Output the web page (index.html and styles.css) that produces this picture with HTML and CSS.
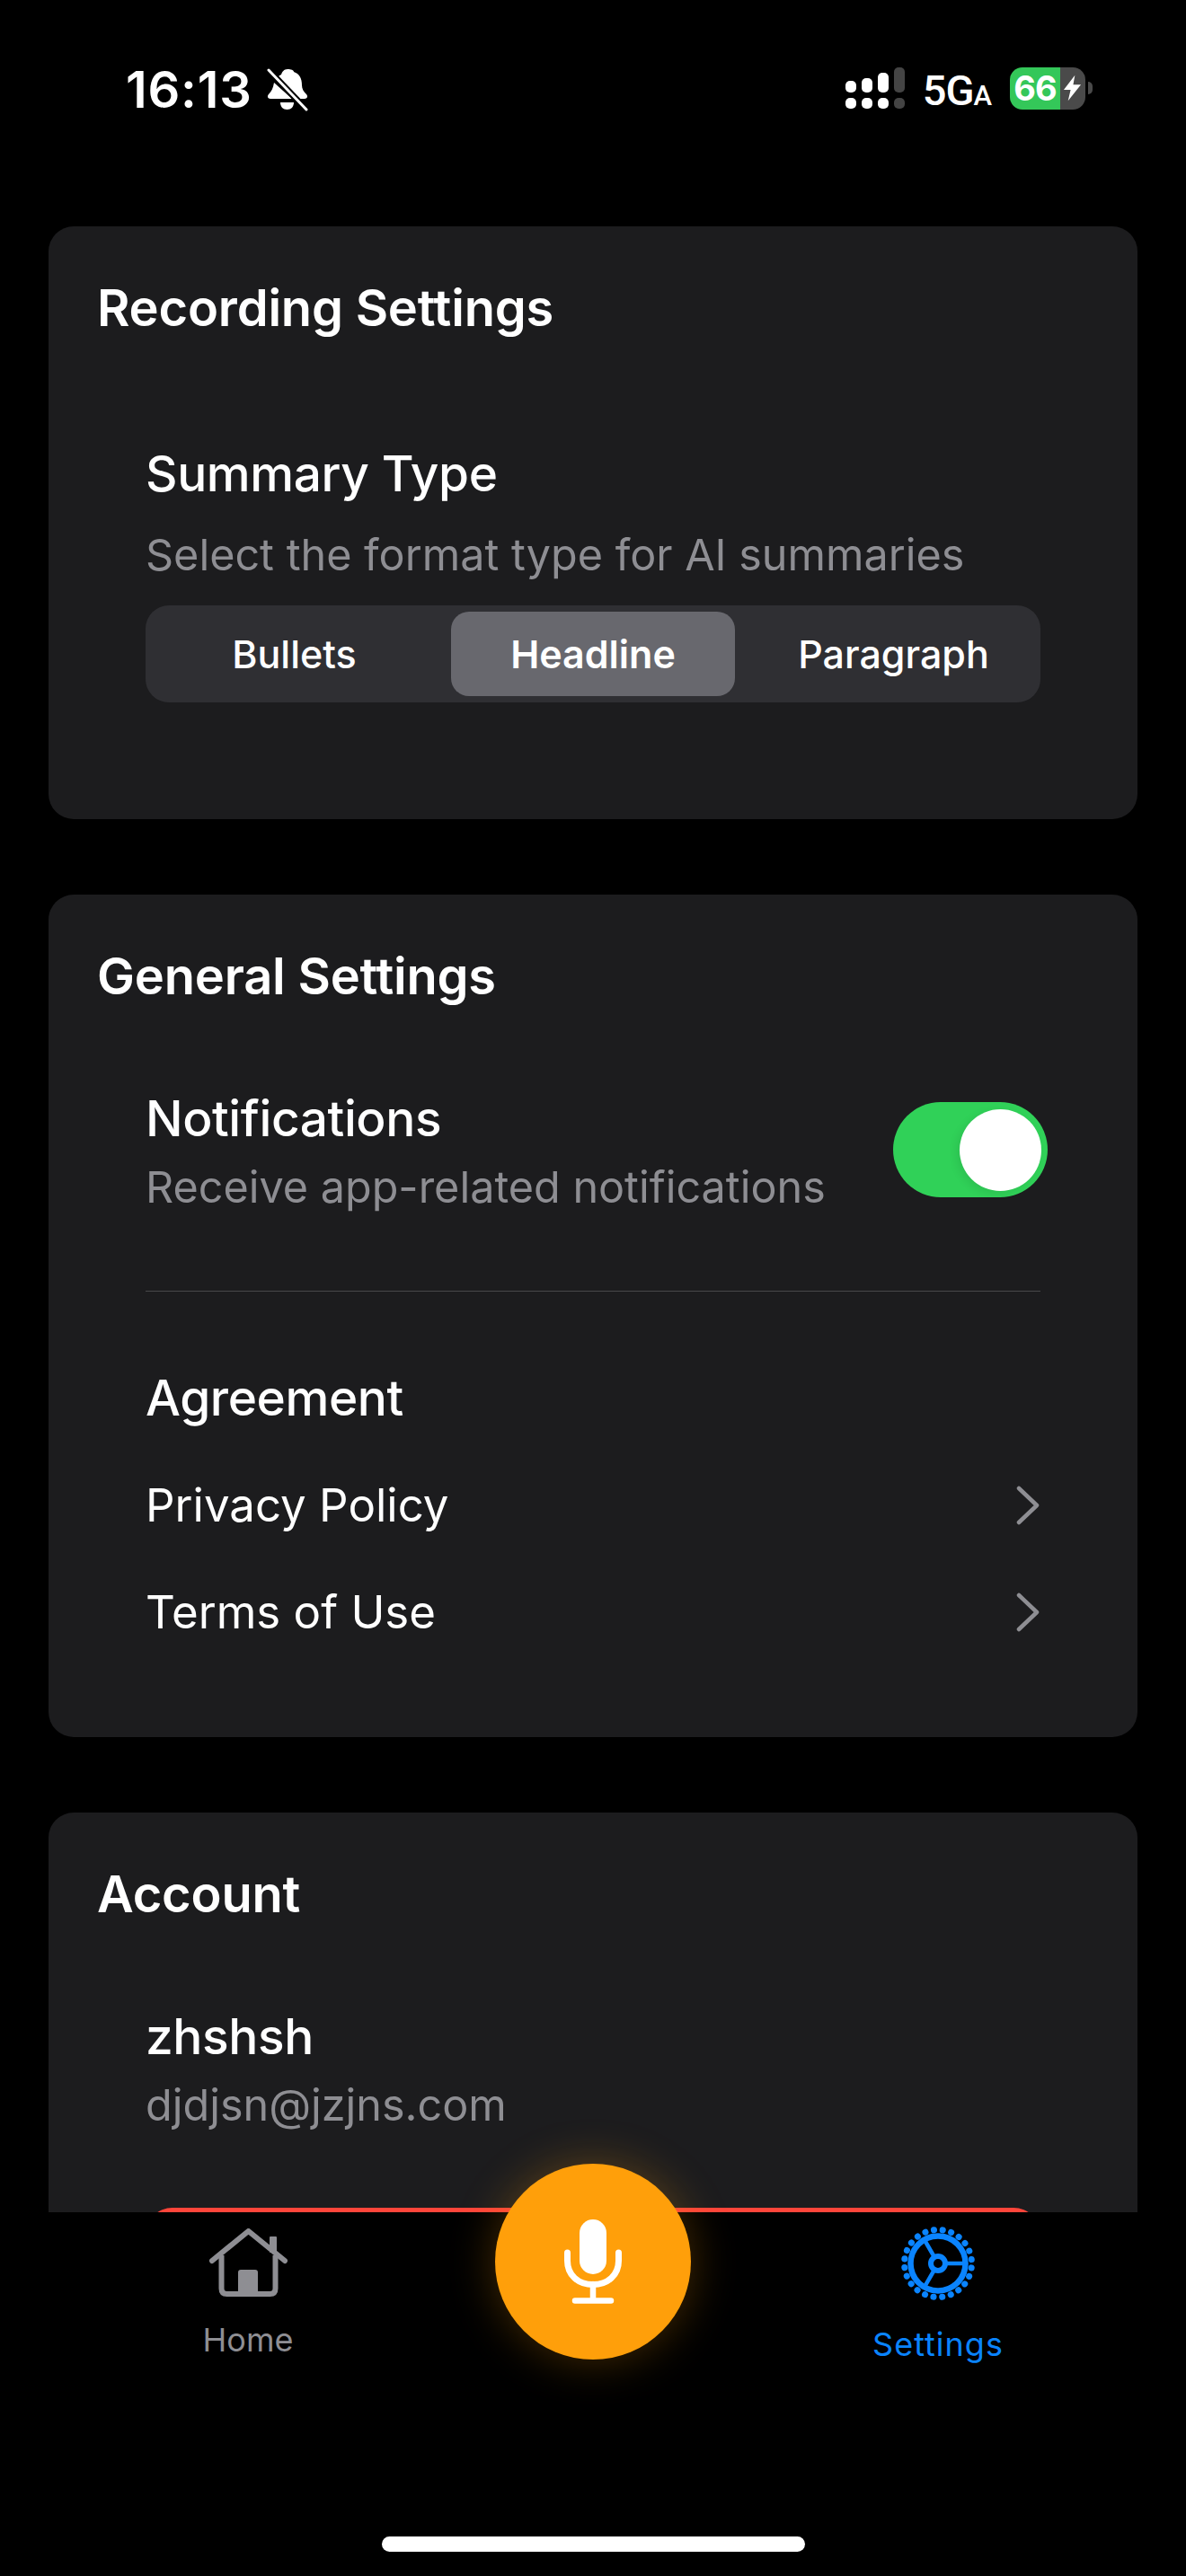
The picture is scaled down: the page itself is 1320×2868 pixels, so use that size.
FILE: index.html
```html
<!DOCTYPE html>
<html lang="en">
<head>
    <meta charset="UTF-8">
    <meta name="viewport" content="width=device-width, initial-scale=1.0">
    <title>Settings</title>
    <link rel="stylesheet" href="styles.css">
</head>
<body>
    <header class="status">
        <div class="status-left">
            <span class="time">16:13</span>
            <svg class="bell" viewBox="0 0 46 48">
                <path d="M23 1c-4 0-6 3-7 6-2 1-3 2-4 3l23 24h7c3 0 4-3 2-5-3-3-5-6-5-10 0-8-3-13-9-15 0-2-3-3-7-3z" fill="#fff"/>
                <path d="M8 16c-1 6-3 10-6 13-2 2-1 5 2 5h24z" fill="#fff"/>
                <path d="M15 38h15c0 5-3 8-7.500 8s-7.500-3-7.500-8z" fill="#fff"/>
                <path d="M2 2l42 44" stroke="#000" stroke-width="7"/>
                <path d="M2 2l42 44" stroke="#fff" stroke-width="3" stroke-linecap="round"/>
            </svg>
        </div>
        <div class="status-right">
            <svg class="signal" viewBox="0 0 66 46">
                <rect x="0" y="15" width="12" height="13" rx="5" fill="#fff"/>
                <rect x="18" y="12" width="12" height="16" rx="5" fill="#fff"/>
                <rect x="36" y="6" width="12" height="22" rx="5" fill="#fff"/>
                <rect x="54" y="0" width="12" height="28" rx="5" fill="#444"/>
                <rect x="0" y="34" width="12" height="12" rx="5" fill="#fff"/>
                <rect x="18" y="34" width="12" height="12" rx="5" fill="#fff"/>
                <rect x="36" y="34" width="12" height="12" rx="5" fill="#fff"/>
                <rect x="54" y="34" width="12" height="12" rx="5" fill="#444"/>
            </svg>
            <span class="net">5G<small>A</small></span>
            <div class="battery">
                <div class="battery-body">
                    <span class="battery-level">66</span>
                    <svg class="bolt" viewBox="0 0 22 30"><path d="M14 0L1 17h8l-3 13L21 11h-9z" fill="#fff"/></svg>
                </div>
                <div class="battery-nub"></div>
            </div>
        </div>
    </header>

    <main class="content">
        <section class="card card-recording">
            <h2>Recording Settings</h2>
            <div class="group group-summary">
                <h3>Summary Type</h3>
                <p class="hint">Select the format type for AI summaries</p>
                <div class="segments">
                    <div class="segment seg-left">Bullets</div>
                    <div class="segment active">Headline</div>
                    <div class="segment seg-right">Paragraph</div>
                </div>
            </div>
        </section>

        <section class="card card-general">
            <h2>General Settings</h2>
            <div class="group">
                <div class="row-toggle">
                    <div>
                        <h3>Notifications</h3>
                        <p class="hint">Receive app-related notifications</p>
                    </div>
                    <div class="toggle"><div class="knob"></div></div>
                </div>
                <div class="divider"></div>
                <h3 class="agreement">Agreement</h3>
                <div class="link-row">
                    <span>Privacy Policy</span>
                    <svg class="chevron" viewBox="0 0 27 44"><path d="M3 3l20 19L3 41" fill="none" stroke="#8e8e93" stroke-width="4.500" stroke-linecap="round" stroke-linejoin="round"/></svg>
                </div>
                <div class="link-row">
                    <span>Terms of Use</span>
                    <svg class="chevron" viewBox="0 0 27 44"><path d="M3 3l20 19L3 41" fill="none" stroke="#8e8e93" stroke-width="4.500" stroke-linecap="round" stroke-linejoin="round"/></svg>
                </div>
            </div>
        </section>

        <section class="card card-account">
            <h2>Account</h2>
            <div class="group">
                <h3>zhshsh</h3>
                <p class="hint">djdjsn@jzjns.com</p>
                <div class="logout"></div>
            </div>
        </section>
    </main>

    <nav class="tabbar">
        <div class="tab tab-home">
            <svg class="tab-icon" viewBox="0 0 87 76">
                <path d="M3 36L43.500 3 84 36" fill="none" stroke="#8e8e93" stroke-width="6" stroke-linecap="round" stroke-linejoin="round"/>
                <path d="M13.500 30v37c0 4 2 6 6 6h48c4 0 6-2 6-6V30" fill="none" stroke="#8e8e93" stroke-width="6"/>
                <path d="M68 10h6v16h-6z" fill="#8e8e93" stroke="#8e8e93" stroke-width="2" stroke-linejoin="round"/>
                <path d="M32 73V49c0-2 1-3 3-3h16c2 0 3 1 3 3v24z" fill="#8e8e93"/>
            </svg>
            <span>Home</span>
        </div>
        <button class="record">
            <svg viewBox="0 0 64 95" class="mic">
                <rect x="17" y="0" width="30" height="61" rx="15" fill="#fff"/>
                <path d="M3.500 37v9c0 16 12 26.500 28.500 26.500S60.500 62 60.500 46v-9" fill="none" stroke="#fff" stroke-width="7" stroke-linecap="round"/>
                <path d="M32 72v18M12 90.500h40" fill="none" stroke="#fff" stroke-width="6.500" stroke-linecap="round"/>
            </svg>
        </button>
        <div class="tab tab-settings">
            <svg class="tab-icon" viewBox="0 0 82 82">
                <circle cx="41" cy="41" r="37.500" fill="none" stroke="#0a84ff" stroke-width="7" stroke-linecap="round" stroke-dasharray="0.1 9.7175" transform="rotate(7.500 41 41)"/>
                <circle cx="41" cy="41" r="30.500" fill="none" stroke="#0a84ff" stroke-width="6.500"/>
                <path d="M49 41h22M37 34L26 15M37 48L26 67" fill="none" stroke="#0a84ff" stroke-width="4.500"/>
                <circle cx="41" cy="41" r="8" fill="none" stroke="#0a84ff" stroke-width="6"/>
            </svg>
            <span>Settings</span>
        </div>
        <div class="home-indicator"></div>
    </nav>
</body>
</html>
```

FILE: styles.css
```css
*{
    margin: 0;
    padding: 0;
    box-sizing: border-box;
}
body{
    font-family: Inter, "Noto Sans", sans-serif;
    color: #fff;
    background-color: #000;
    width: 1320px;
    height: 2868px;
    overflow: hidden;
    display: flex;
    flex-direction: column;
}

/* status bar */
.status{
    height: 252px;
    flex-shrink: 0;
    display: flex;
    justify-content: space-between;
    align-items: flex-start;
    padding: 74px 104px 0 140px;
}
.status-left{
    display: flex;
    align-items: center;
    gap: 16px;
}
.time{
    font-size: 56px;
    line-height: 52px;
    font-weight: 600;
    letter-spacing: 0.8px;
}
.bell{
    width: 46px;
    height: 48px;
}
.status-right{
    display: flex;
    align-items: center;
    height: 48px;
}
.signal{
    width: 66px;
    height: 46px;
}
.net{
    margin-left: 20px;
    padding-top: 12px;
    font-family: Roboto, sans-serif;
    font-size: 47px;
    font-weight: 500;
    line-height: 48px;
    letter-spacing: -1px;
}
.net small{
    font-size: 31px;
}
.battery{
    margin-left: 21px;
    display: flex;
    align-items: center;
    gap: 3px;
}
.battery-body{
    width: 84px;
    height: 47px;
    border-radius: 14px;
    background: linear-gradient(to right, #34c759 56px, #4a4a4a 56px);
    display: flex;
    align-items: center;
    overflow: hidden;
}
.battery-level{
    width: 56px;
    text-align: center;
    font-size: 38px;
    font-weight: 700;
    letter-spacing: -1px;
}
.bolt{
    width: 21px;
    height: 30px;
    margin-left: 3px;
}
.battery-nub{
    width: 5px;
    height: 14px;
    background-color: #4a4a4a;
    border-radius: 0 5px 5px 0;
}

/* cards */
.content{
    flex: 1;
    min-height: 0;
    overflow: hidden;
    padding: 0 54px;
    display: flex;
    flex-direction: column;
    gap: 84px;
}
.card{
    background-color: #1c1c1e;
    border-radius: 28px;
    padding: 59px 54px 0;
    flex-shrink: 0;
}
.card-recording{
    height: 660px;
}
.card-general{
    height: 938px;
}
.card-account{
    height: 640px;
}
h2{
    font-size: 56px;
    line-height: 64px;
    font-weight: 600;
    letter-spacing: -0.2px;
}
h3{
    font-size: 55px;
    line-height: 64px;
    font-weight: 500;
    letter-spacing: -0.4px;
}
.group{
    padding: 94px 54px 0;
}
.group-summary{
    padding-top: 120px;
}
.hint{
    font-size: 48.500px;
    line-height: 60px;
    color: #8e8e93;
}
.group-summary .hint{
    margin-top: 29px;
}
.segments{
    margin-top: 26px;
    height: 108px;
    padding: 7px;
    background-color: #2f2f33;
    border-radius: 26px;
    display: grid;
    grid-template-columns: 1fr 316px 1fr;
}
.segment{
    display: flex;
    align-items: center;
    justify-content: center;
    font-size: 43px;
    font-weight: 500;
}
.seg-left{
    padding-right: 16px;
}
.seg-right{
    padding-left: 20px;
}
.segment.active{
    background-color: #68686e;
    border-radius: 20px;
    font-weight: 600;
}
.row-toggle{
    display: flex;
    justify-content: space-between;
    align-items: center;
    margin-right: -8px;
}
.row-toggle .hint{
    margin-top: 15px;
}
.toggle{
    width: 172px;
    height: 106px;
    border-radius: 53px;
    background-color: #30d158;
    padding: 8px 7px 0 0;
    margin-bottom: 5px;
    display: flex;
    justify-content: flex-end;
}
.knob{
    width: 91px;
    height: 91px;
    border-radius: 50%;
    background-color: #fff;
    box-shadow: -4px 3px 10px rgba(0, 0, 0, 0.08);
}
.divider{
    height: 1px;
    background-color: #48484a;
    margin-top: 85px;
}
.agreement{
    margin-top: 86px;
}
.link-row{
    display: flex;
    justify-content: space-between;
    align-items: center;
    font-size: 51px;
    height: 119px;
}
.agreement + .link-row{
    margin-top: 28px;
}
.chevron{
    width: 27px;
    height: 44px;
}
.card-account .hint{
    margin-top: 15px;
}
.logout{
    height: 120px;
    margin-top: 84px;
    background-color: #ff453a;
    border-radius: 30px;
}

/* tab bar */
.tabbar{
    height: 405px;
    flex-shrink: 0;
    background-color: #000;
    position: relative;
    display: flex;
    justify-content: space-between;
    padding: 0 204px 0 216px;
}
.tab{
    display: flex;
    flex-direction: column;
    align-items: center;
    font-size: 36px;
}
.tab-home{
    width: 120px;
    color: #8e8e93;
    padding-top: 18px;
}
.tab-settings{
    width: 144px;
    color: #0a84ff;
    padding-top: 16px;
    letter-spacing: 1px;
}
.tab-icon{
    width: 87px;
    height: 76px;
}
.tab-home span{
    margin-top: 26px;
}
.tab-settings .tab-icon{
    width: 82px;
    height: 82px;
}
.tab-settings span{
    margin-top: 27px;
}
.record{
    position: absolute;
    left: 551px;
    top: -54px;
    width: 218px;
    height: 218px;
    border: none;
    border-radius: 50%;
    background-color: #ff9f0a;
    box-shadow: 0 0 50px rgba(255, 159, 10, 0.28);
    display: flex;
    align-items: center;
    justify-content: center;
}
.mic{
    width: 64px;
    height: 95px;
}
.home-indicator{
    position: absolute;
    left: 425px;
    bottom: 27px;
    width: 471px;
    height: 17px;
    border-radius: 8.500px;
    background-color: #fff;
}
```
